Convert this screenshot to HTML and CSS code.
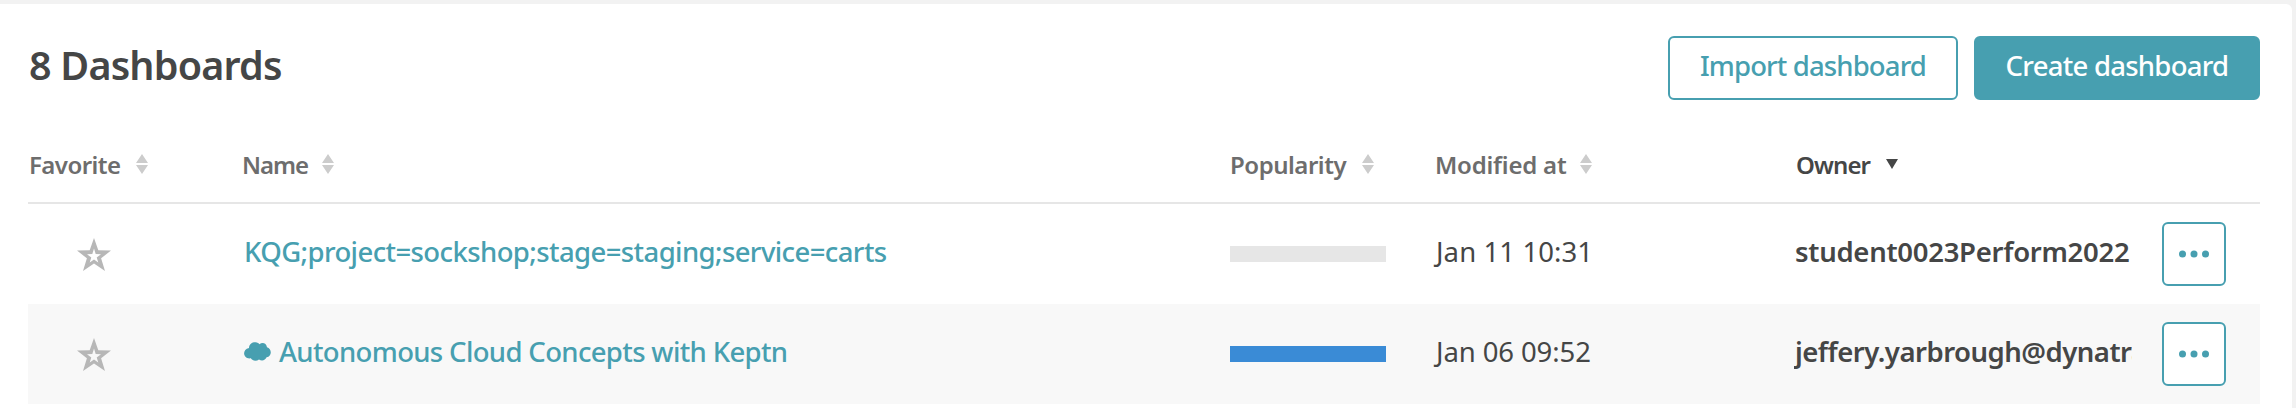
FILE: index.html
```
<!DOCTYPE html>
<html lang="en">
<head>
<meta charset="utf-8">
<title>Dashboards</title>
<link rel="stylesheet" href="styles.css">
</head>
<body>
<svg class="defs" aria-hidden="true">
  <symbol id="sort" viewBox="0 0 12 20"><path d="M6 0 12 9H0ZM0 11h12L6 20Z"/></symbol>
  <symbol id="star" viewBox="0 0 34 33"><path fill-rule="evenodd" d="M17 0 21.300 12.300 34 12.600 24.100 20.300 28 33 17 25.500 6 33 9.900 20.300 0 12.600 12.700 12.300ZM17 10.500 15.300 16 10 16.200 14.300 19.500 12.700 24.600 17 21.600 21.300 24.600 19.700 19.500 24 16.200 18.700 16Z"/></symbol>
  <symbol id="dots" viewBox="0 0 30 8"><circle cx="3.500" cy="4" r="3.500"/><circle cx="15" cy="4" r="3.500"/><circle cx="26.500" cy="4" r="3.500"/></symbol>
</svg>
<main class="panel">
  <header class="toolbar">
    <h1 class="title">8 Dashboards</h1>
    <button class="btn btn-import">Import dashboard</button>
    <button class="btn btn-create">Create dashboard</button>
  </header>
  <section class="table">
    <div class="row head">
      <div class="cell h-favorite"><span>Favorite</span><svg class="sort"><use href="#sort"/></svg></div>
      <div class="cell h-name"><span>Name</span><svg class="sort"><use href="#sort"/></svg></div>
      <div class="cell h-popularity"><span>Popularity</span><svg class="sort"><use href="#sort"/></svg></div>
      <div class="cell h-modified"><span>Modified at</span><svg class="sort"><use href="#sort"/></svg></div>
      <div class="cell h-owner"><span>Owner</span><svg class="sort-down" viewBox="0 0 12 10"><path d="M0 0h12L6 10Z"/></svg></div>
    </div>
    <div class="row">
      <div class="cell favorite"><svg class="star"><use href="#star"/></svg></div>
      <div class="cell name"><a class="link-query">KQG;project=sockshop;stage=staging;service=carts</a></div>
      <div class="cell"><div class="bar"></div></div>
      <div class="cell modified">Jan 11 10:31</div>
      <div class="cell owner">student0023Perform2022</div>
      <button class="more" aria-label="More"><svg class="dots"><use href="#dots"/></svg></button>
    </div>
    <div class="row shaded">
      <div class="cell favorite"><svg class="star"><use href="#star"/></svg></div>
      <div class="cell name"><svg class="cloud" viewBox="0 0 27 19"><path d="M5 6C5 2 8.500 0 11.500.2c2 .1 3.300 1 4 2C18-.2 22.500.8 23 5.300c5 1.700 5.200 8.700-.4 10-1.200 3-4.700 4-7.600 2.200-2.500 1.900-6.500 1.600-8.200-1.200C-1 17.500-2.500 7.500 5 6Z"/></svg><a class="link-title">Autonomous Cloud Concepts with Keptn</a></div>
      <div class="cell"><div class="bar full"></div></div>
      <div class="cell modified later">Jan 06 09:52</div>
      <div class="cell owner clipped">jeffery.yarbrough@dynatrace.com</div>
      <button class="more" aria-label="More"><svg class="dots"><use href="#dots"/></svg></button>
    </div>
  </section>
</main>
</body>
</html>
```
FILE: styles.css
```
* { box-sizing: border-box; }
body {
  height: 408px;
  margin: 0;
  padding: 4px 4px 0 0;
  overflow: hidden;
  background: #f2f2f2;
  color: #454646;
  font: 400 27.5px/38px "Noto Sans", "Open Sans", sans-serif;
}
.defs { display: none; }
.panel {
  height: 404px;
  padding: 32px 32px 0 28px;
  background: #fff;
  border-top-right-radius: 6px;
}
.toolbar { display: flex; align-items: center; height: 64px; }
.title {
  flex: 1;
  margin: 0;
  padding: 0 0 5px 1px;
  font-size: 39.5px;
  line-height: 57px;
  font-weight: 600;
  letter-spacing: -0.8px;
}
.btn {
  height: 64px;
  padding: 0 0 4px;
  border: 2px solid #479fb0;
  border-radius: 6px;
  background: #fff;
  color: #479fb0;
  font: inherit;
  font-weight: 500;
  letter-spacing: -0.87px;
}
.btn-import { width: 290px; margin-right: 16px; }
.btn-create { width: 286px; background: #479fb0; color: #fff; letter-spacing: -0.74px; }
.row {
  display: grid;
  grid-template-columns: 214px 988px 204px 360px 338px 94px;
  align-items: center;
  height: 100px;
}
.shaded { background: #f8f8f8; }
.cell { display: flex; align-items: center; white-space: nowrap; }
.head {
  height: 104px;
  padding-top: 26px;
  border-bottom: 2px solid #e6e6e6;
  color: #6d6d6d;
  font-size: 24px;
  font-weight: 600;
}
.head .cell { height: 76px; }
.head span { padding-top: 2px; }
.h-favorite span { width: 108px; padding-left: 1px; letter-spacing: -0.55px; }
.h-name span { width: 80px; letter-spacing: -1px; }
.h-popularity span { width: 132px; letter-spacing: -0.47px; }
.h-modified span { width: 146px; padding-left: 1px; letter-spacing: -0.2px; }
.h-owner span { width: 92px; padding-left: 2px; letter-spacing: -0.9px; }
.h-owner { color: #454646; }
.sort { width: 12px; height: 20px; fill: #ccc; }
.sort-down { width: 12px; height: 10px; fill: #454646; }
.favorite { padding-left: 49px; }
.star { width: 34px; height: 33px; fill: #b7b7b7; }
.name { padding: 0 0 4px 2px; color: #479fb0; font-weight: 500; }
.link-query { letter-spacing: -0.6px; }
.link-title { letter-spacing: -0.65px; }
.cloud { width: 27px; height: 19px; margin: 0 8px 2px 0; fill: #479fb0; }
.bar { width: 156px; height: 16px; background: #e6e6e6; }
.bar.full { background: #3a8bd6; }
.modified { padding: 0 0 4px 2px; letter-spacing: 0.1px; }
.modified.later { letter-spacing: -0.1px; }
.owner { display: block; padding: 0 0 4px 1px; overflow: hidden; font-weight: 600; letter-spacing: -0.28px; }
.owner.clipped { letter-spacing: -0.5px; }
.more {
  display: flex;
  align-items: center;
  justify-content: center;
  width: 64px;
  height: 64px;
  margin-left: 30px;
  padding: 0;
  border: 2px solid #479fb0;
  border-radius: 6px;
  background: #fff;
}
.dots { width: 30px; height: 8px; fill: #479fb0; }
```
